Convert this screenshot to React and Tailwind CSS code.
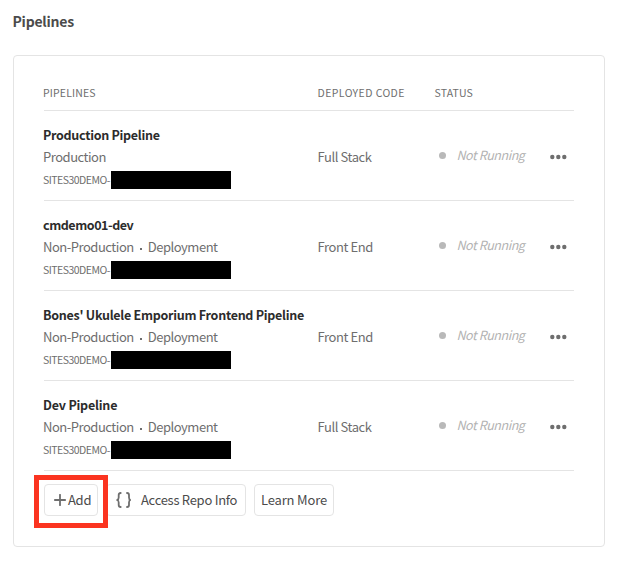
const pipelines = [
  { name: 'Production Pipeline', track: 'tracking-[-0.29px]', kind: ['Production'], code: 'Full Stack' },
  { name: 'cmdemo01-dev', track: 'tracking-[-0.45px]', kind: ['Non-Production', 'Deployment'], code: 'Front End' },
  { name: "Bones' Ukulele Emporium Frontend Pipeline", track: 'tracking-[-0.27px]', kind: ['Non-Production', 'Deployment'], code: 'Front End' },
  { name: 'Dev Pipeline', track: 'tracking-[-0.2px]', kind: ['Non-Production', 'Deployment'], code: 'Full Stack' },
];

const columns = 'grid grid-cols-[274px_117px_115px_25px]';

function Row({ name, track, kind, code }) {
  return (
    <div className={`${columns} h-[90px] border-b border-[#e4e4e4] text-[13px] tracking-[-0.48px] text-[#6e6e6e]`}>
      <div className="-ml-px pt-[13px] whitespace-nowrap">
        <div className={`h-[22px] text-[12.5px] leading-[22px] font-bold text-[#2c2c2c] ${track}`}>{name}</div>
        <div className="flex h-[22px] items-center leading-[22px]">
          <span>{kind[0]}</span>
          {kind[1] && (
            <>
              <span className="mt-[3px] mr-[6px] ml-[6px] size-[2px] bg-[#6e6e6e]" />
              <span>{kind[1]}</span>
            </>
          )}
        </div>
        <div className="flex h-[24px] items-center text-[10.5px] tracking-[-0.52px]">
          <span className="w-[67.5px]">SITES30DEMO-</span>
          <span className="relative h-[18px] w-[120px] bg-black" />
        </div>
      </div>
      <div className="-ml-[0.5px] pt-[35px] leading-[22px] tracking-[-0.42px]">{code}</div>
      <div className="mt-[33px] flex h-[22px] items-center pl-[3.5px] text-[12.5px] leading-[22px] tracking-[-0.44px] whitespace-nowrap text-[#b3b3b3] italic">
        <span className="mt-[1px] mr-[11px] size-[7px] rounded-full bg-[#b9b9b9]" />
        <span>Not Running</span>
      </div>
      <svg className="mt-[43px] h-[6px] w-[17px]" viewBox="0 0 17 6" fill="#6e6e6e">
        <circle cx="2.3" cy="3" r="2.2" />
        <circle cx="8.3" cy="3" r="2.2" />
        <circle cx="14.3" cy="3" r="2.2" />
      </svg>
    </div>
  );
}

const button = 'flex h-8 items-center rounded border border-[#e4e4e4] bg-white whitespace-nowrap';

export default function App() {
  return (
    <main className="h-[566px] w-[626px] bg-white pl-[13px] font-['Noto_Sans_CJK_JP',sans-serif]">
      <h1 className="-ml-[0.5px] h-[55px] pt-[10px] text-[14px] leading-[22px] font-bold tracking-[-0.22px] text-[#4b4b4b]">Pipelines</h1>
      <section className="h-[492px] w-[592px] rounded border border-[#e4e4e4] px-[30px] pt-[29px]">
        <div className={`${columns} h-[26px] border-b border-[#e4e4e4] text-[10.5px] leading-[16px] tracking-[0.3px] text-[#6e6e6e]`}>
          <span className="-ml-px tracking-[0.15px]">PIPELINES</span>
          <span className="-ml-[0.5px] tracking-[0.42px]">DEPLOYED CODE</span>
          <span className="-ml-[0.5px] tracking-[0.15px]">STATUS</span>
        </div>
        {pipelines.map((p) => (
          <Row key={p.name} {...p} />
        ))}
        <div className="mt-[13px] flex text-[13px] tracking-[-0.28px] text-[#4b4b4b]">
          <div className="relative">
            <button className={`${button} w-[54px] pl-[9px]`}>
              <svg className="mr-[2px] size-3" viewBox="0 0 12 12" stroke="#6e6e6e" strokeWidth="1.8" strokeLinecap="round">
                <path d="M6 .8v10.4M.8 6h10.4" />
              </svg>
              Add
            </button>
            <div className="absolute top-[-9px] left-[-10.5px] z-10 h-[53px] w-[74px] border-[5px] border-[#fb3420]" />
          </div>
          <button className={`${button} ml-[8px] w-[140px] pl-[9px]`}>
            <svg className="mr-[10px] h-4 w-[15px]" viewBox="0 0 15 16" fill="none" stroke="#6e6e6e" strokeWidth="1.8" strokeLinecap="round" strokeLinejoin="round">
              <path d="M4.7 1C3.1 1 2.7 1.7 2.7 3v2.500C2.700 7 2.200 7.700 1.100 8c1.100.3 1.600 1 1.600 2.500V13c0 1.300.4 2 2 2M11 1c1.600 0 2 .7 2 2v2.500c0 1.500.5 2.200 1.300 2.500-.8.3-1.300 1-1.300 2.500V13c0 1.300-.4 2-2 2" />
            </svg>
            Access Repo Info
          </button>
          <button className={`${button} ml-[8px] w-[80px] justify-center tracking-[-0.15px]`}>Learn More</button>
        </div>
      </section>
    </main>
  );
}
